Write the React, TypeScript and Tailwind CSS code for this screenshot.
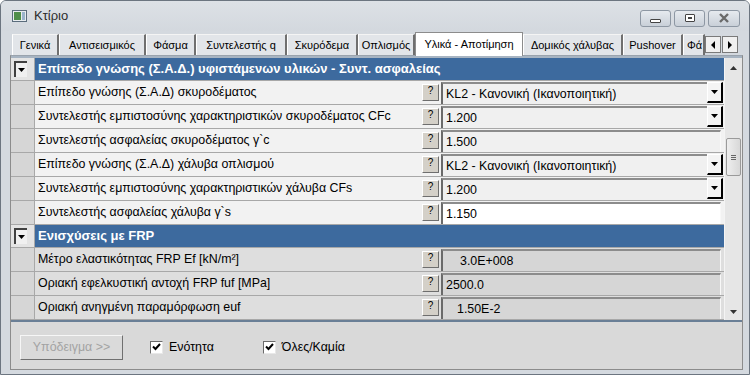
import React from "react";

type RowProps = {
  label: string;
  value: string;
  combo?: boolean;
  frp?: boolean;
  selected?: boolean;
  indent?: string;
};

const tabs: { name: string; w: string }[] = [
  { name: "Γενικά", w: "w-[47px]" },
  { name: "Αντισεισμικός", w: "w-[87px]" },
  { name: "Φάσμα", w: "w-[50px]" },
  { name: "Συντελεστής q", w: "w-[91px]" },
  { name: "Σκυρόδεμα", w: "w-[71px]" },
  { name: "Οπλισμός", w: "w-[57px]" },
  { name: "Υλικά - Αποτίμηση", w: "w-[108px]" },
  { name: "Δομικός χάλυβας", w: "w-[100px]" },
  { name: "Pushover", w: "w-[60px]" },
  { name: "Φά", w: "w-[22px]" },
];

function HelpButton() {
  return (
    <div className="w-[17px] h-[17px] mt-[3px] shrink-0 bg-[#d4d0c8] border border-t-white border-l-white border-r-[#6e6e6e] border-b-[#6e6e6e] flex items-start justify-center text-[10px] leading-[12px] text-black">
      ?
    </div>
  );
}

function Row({ label, value, combo, frp, selected, indent = "pl-[3px]" }: RowProps) {
  const rowBg = frp ? "bg-[#dedede]" : "bg-[#f2f2f2]";
  const boxBg = selected ? "bg-white" : frp ? "bg-[#d6d6d6]" : "bg-[#f0f0f0]";
  return (
    <div className="flex h-[24px] border-b border-[#a8a8a8]">
      <div className="w-[24px] shrink-0 bg-[#d6d6d6] border-r border-[#a8a8a8]" />
      <div className={`flex-1 flex items-center pl-[3px] whitespace-nowrap overflow-hidden ${rowBg}`}>{label}</div>
      <div className={`flex gap-[2px] pr-[1px] ${rowBg}`}>
        <HelpButton />
        <div className="w-[282px] h-[22px] mt-[1px] flex">
          <div
            className={`flex-1 flex items-center ${indent} ${boxBg} border-t-2 border-l-2 border-t-[#8c8c8c] border-l-[#6a6a6a] ${combo ? "" : "mr-[2px] border-r border-r-[#f8f8f8]"}`}
          >
            {value}
          </div>
          {combo && (
            <div className="w-[16px] h-[21px] bg-[#f4f4f4] border border-l-white border-t-white border-r-2 border-b-2 border-r-black border-b-black flex items-center justify-center">
              <svg width="8" height="5" viewBox="0 0 8 5">
                <path d="M0 0h7L3.5 4z" fill="#000" />
              </svg>
            </div>
          )}
        </div>
      </div>
    </div>
  );
}

function Header({ title }: { title: string }) {
  return (
    <div className="flex h-[24px] border-b border-[#a8a8a8]">
      <div className="w-[24px] shrink-0 bg-[#e4e4e4] border-r border-[#a8a8a8] flex items-start pl-[3px] pt-[3px]">
        <div className="w-[13px] h-[16px] bg-[#f0f0f0] border-t-2 border-l-2 border-[#404040] flex items-center justify-center">
          <svg width="7" height="4" viewBox="0 0 7 4">
            <path d="M0 0h7L3.5 4z" fill="#000" />
          </svg>
        </div>
      </div>
      <div className="flex-1 bg-[#3d6a9e] text-white font-bold text-[13px] flex items-center pl-[3px] whitespace-nowrap overflow-hidden">
        {title}
      </div>
    </div>
  );
}

function TitleButton({ children, close }: { children: React.ReactNode; close?: boolean }) {
  return (
    <div
      className={`h-[17px] ${close ? "w-[32px]" : "w-[31px]"} rounded-[3px] border border-[#8d97a3] bg-gradient-to-b from-[#e6eaef] to-[#c9d0d8] flex items-center justify-center`}
    >
      {children}
    </div>
  );
}

function Check({ label }: { label: string }) {
  return (
    <div className="flex items-center gap-[6px]">
      <div className="w-[13px] h-[13px] bg-white border border-t-[#6a6a6a] border-l-[#6a6a6a] border-r-[#e8e8e8] border-b-[#e8e8e8] flex items-center justify-center">
        <svg width="9" height="8" viewBox="0 0 9 8">
          <path d="M1 3.5l2.5 2.5L8 1" stroke="#000" strokeWidth="2" fill="none" />
        </svg>
      </div>
      <span>{label}</span>
    </div>
  );
}

export default function App() {
  return (
    <div
      className="w-[750px] h-[375px] overflow-hidden bg-[#d4d9df] border border-[#6c7580] rounded-t-[6px] flex flex-col text-[12.4px] text-black"
      style={{ fontFamily: '"Liberation Sans", Arial, sans-serif' }}
    >
      {/* Title bar */}
      <div className="h-[30px] shrink-0 flex items-center pl-[11px] pr-[9px] bg-gradient-to-b from-[#dde1e6] to-[#d3d8de]">
        <svg width="15" height="12" viewBox="0 0 15 12" className="mr-[7px]">
          <rect x="0.5" y="0.5" width="14" height="11" fill="#e8ecef" stroke="#5a6c7c" />
          <rect x="2" y="2" width="7" height="8" fill="#4f8e4a" />
          <rect x="10" y="2" width="3" height="8" fill="#9ab4cc" />
        </svg>
        <span className="text-[13px] text-[#2c2c2c]">Κτίριο</span>
        <div className="ml-auto flex gap-[3px] mt-[4px]">
          <TitleButton>
            <div className="w-[11px] h-[4px] mt-[5px] border border-[#444] rounded-[1px] bg-white" />
          </TitleButton>
          <TitleButton>
            <div className="w-[10px] h-[8px] border border-[#444] rounded-[1px] bg-white flex items-center justify-center">
              <div className="w-[4px] h-[2px] bg-[#444]" />
            </div>
          </TitleButton>
          <TitleButton close>
            <svg width="12" height="10" viewBox="0 0 12 10">
              <path d="M2 1l8 8M10 1L2 9" stroke="#6a6a6a" strokeWidth="2.4" />
            </svg>
          </TitleButton>
        </div>
      </div>

      <div className="flex-1 flex flex-col px-[9px]">
        {/* Tabs */}
        <div className="h-[24px] shrink-0 flex items-end pl-[2px] text-[11px]">
          {tabs.map((t, i) =>
            i === 6 ? (
              <div
                key={i}
                className={`${t.w} shrink-0 h-[24px] bg-white border border-[#8c8c8c] border-b-0 flex items-center justify-center whitespace-nowrap relative top-[1px] z-10`}
              >
                {t.name}
              </div>
            ) : (
              <div
                key={i}
                className={`${t.w} shrink-0 h-[21px] bg-[#e2e5e9] border-l border-l-white border-r-2 border-r-[#6f6f6f] border-t border-t-[#f4f4f4] flex items-center ${i === 9 ? "justify-start pl-[3px] overflow-hidden" : "justify-center"} whitespace-nowrap`}
              >
                {t.name}
              </div>
            )
          )}
          <div className="flex mb-[2px] gap-[1px]">
            <div className="w-[16px] h-[17px] bg-[#f0f0f0] border border-[#7a7a7a] flex items-center justify-center">
              <svg width="4" height="8" viewBox="0 0 4 8">
                <path d="M4 0v8L0 4z" fill="#000" />
              </svg>
            </div>
            <div className="w-[16px] h-[17px] bg-[#f0f0f0] border border-[#7a7a7a] flex items-center justify-center">
              <svg width="4" height="8" viewBox="0 0 4 8">
                <path d="M0 0v8L4 4z" fill="#000" />
              </svg>
            </div>
          </div>
        </div>

        {/* Tab panel */}
        <div className="w-[733px] h-[315px] shrink-0 bg-[#d9d9d9] border border-[#8c8c8c] border-t-[#9aa3ad] flex flex-col">
          <div className="flex h-[266px] shrink-0 border-t-2 border-t-[#a7b4c2] border-b-2 border-b-[#6a7f96]">
            <div className="flex-1 flex flex-col overflow-hidden">
              <Header title="Επίπεδο γνώσης (Σ.Α.Δ.) υφιστάμενων υλικών - Συντ. ασφαλείας" />
              <Row label="Επίπεδο γνώσης (Σ.Α.Δ) σκυροδέματος" value="KL2 - Κανονική (Ικανοποιητική)" combo />
              <Row label="Συντελεστής εμπιστοσύνης χαρακτηριστικών σκυροδέματος CFc" value="1.200" combo />
              <Row label="Συντελεστής ασφαλείας σκυροδέματος γ`c" value="1.500" />
              <Row label="Επίπεδο γνώσης (Σ.Α.Δ) χάλυβα οπλισμού" value="KL2 - Κανονική (Ικανοποιητική)" combo />
              <Row label="Συντελεστής εμπιστοσύνης χαρακτηριστικών χάλυβα CFs" value="1.200" combo />
              <Row label="Συντελεστής ασφαλείας χάλυβα γ`s" value="1.150" selected />
              <Header title="Ενισχύσεις με FRP" />
              <Row label="Μέτρο ελαστικότητας FRP Ef [kN/m²]" value="3.0E+008" frp indent="pl-[17px]" />
              <Row label="Οριακή εφελκυστική αντοχή FRP fuf [MPa]" value="2500.0" frp />
              <Row label="Οριακή ανηγμένη παραμόρφωση euf" value="1.50E-2" frp indent="pl-[14px]" />
            </div>
            {/* Scrollbar */}
            <div className="w-[18px] shrink-0 bg-[#e6e6e6] border-l border-[#f4f4f4] flex flex-col items-center">
              <div className="h-[16px] flex items-center justify-center mt-[2px]">
                <svg width="7" height="4" viewBox="0 0 7 4">
                  <path d="M0 4h7L3.5 0z" fill="#333" />
                </svg>
              </div>
              <div className="mt-[62px] w-[15px] h-[38px] rounded-[2px] border border-[#9a9a9a] bg-gradient-to-r from-[#eeeeee] to-[#d8d8d8] flex flex-col items-center justify-center gap-[1px]">
                <div className="w-[5px] h-[1px] bg-[#666]" />
                <div className="w-[5px] h-[1px] bg-[#666]" />
                <div className="w-[5px] h-[1px] bg-[#666]" />
              </div>
              <div className="mt-auto mb-[3px] h-[10px] flex items-center justify-center">
                <svg width="7" height="4" viewBox="0 0 7 4">
                  <path d="M0 0h7L3.5 4z" fill="#333" />
                </svg>
              </div>
            </div>
          </div>

          {/* Bottom bar */}
          <div className="flex-1 flex items-center pl-[9px] pt-[4px]">
            <div className="w-[103px] h-[25px] bg-[#dadada] border border-t-[#f6f6f6] border-l-[#f6f6f6] border-r-[#707070] border-b-[#707070] flex items-center justify-center text-[#a3a3a3]">
              Υπόδειγμα &gt;&gt;
            </div>
            <div className="ml-[27px]">
              <Check label="Ενότητα" />
            </div>
            <div className="ml-[49px]">
              <Check label="Όλες/Καμία" />
            </div>
          </div>
        </div>
      </div>
    </div>
  );
}
